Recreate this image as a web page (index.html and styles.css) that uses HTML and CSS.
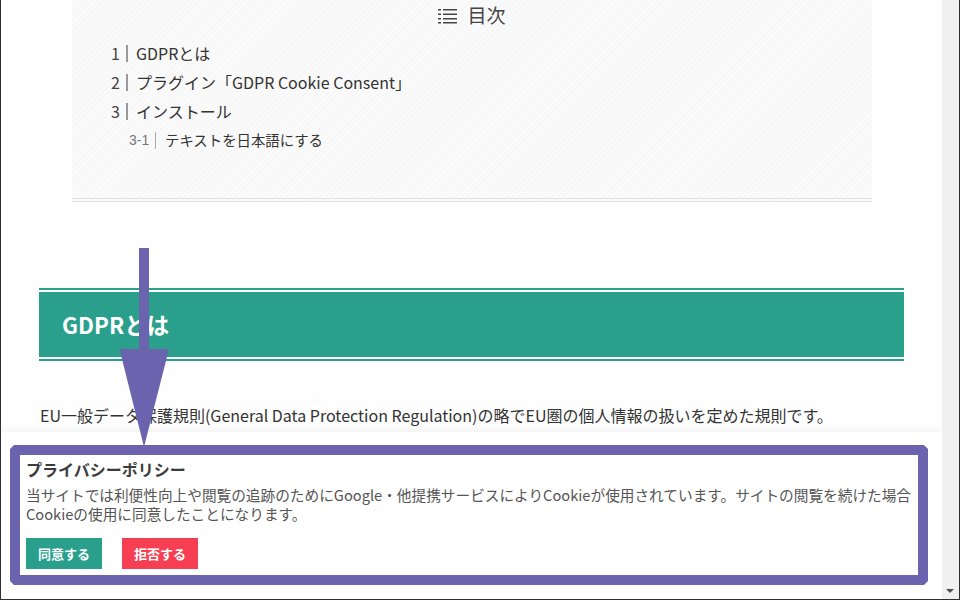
FILE: index.html
```html
<!DOCTYPE html>
<html lang="ja">
<head>
<meta charset="utf-8">
<title>GDPR Cookie Consent</title>
<link rel="stylesheet" href="styles.css">
</head>
<body>
<div class="window">
  <main class="page">
    <nav class="toc">
      <div class="toc-title">
        <svg class="toc-icon" width="19" height="16" viewBox="0 0 19 16" aria-hidden="true">
          <path d="M0 1h3v1.500H0zM0 5.500h3V7H0zM0 10h3v1.500H0zM0 14h3v1.500H0z" fill="#444"/>
          <path d="M5 1h14v1.500H5zM5 5.500h14V7H5zM5 10h14v1.500H5zM5 14h14v1.500H5z" fill="#444"/>
        </svg>
        <span>目次</span>
      </div>
      <ol class="toc-list">
        <li class="toc-item"><span class="toc-num">1</span><span class="toc-text">GDPRとは</span></li>
        <li class="toc-item"><span class="toc-num">2</span><span class="toc-text">プラグイン「GDPR Cookie Consent」</span></li>
        <li class="toc-item"><span class="toc-num">3</span><span class="toc-text">インストール</span></li>
        <li class="toc-item toc-sub"><span class="toc-num">3-1</span><span class="toc-text">テキストを日本語にする</span></li>
      </ol>
    </nav>
    <h2 class="section-heading">GDPRとは</h2>
    <p class="lead">EU一般データ保護規則(General Data Protection Regulation)の略でEU圏の個人情報の扱いを定めた規則です。</p>
    <aside class="cookie">
      <div class="cookie-frame">
        <div class="cookie-inner">
          <h3 class="cookie-title">プライバシーポリシー</h3>
          <p class="cookie-text">当サイトでは利便性向上や閲覧の追跡のためにGoogle・他提携サービスによりCookieが使用されています。サイトの閲覧を続けた場合Cookieの使用に同意したことになります。</p>
          <div class="cookie-actions">
            <button class="btn btn-accept">同意する</button>
            <button class="btn btn-reject">拒否する</button>
          </div>
        </div>
      </div>
    </aside>
  </main>
  <div class="scrollbar"><span class="scroll-down"></span></div>
  <svg class="callout" width="960" height="600" viewBox="0 0 960 600" aria-hidden="true">
    <path d="M139 248h10v101h20L144 447 119.500 349H139z" fill="#6b63ad"/>
  </svg>
</div>
</body>
</html>
```
FILE: styles.css
```css
* { box-sizing: border-box; }
html, body { margin: 0; padding: 0; }
body {
  width: 960px;
  height: 600px;
  overflow: hidden;
  background: #fff;
  color: #333;
  font-family: "Noto Sans CJK JP", "Noto Sans", sans-serif;
}
.window {
  position: relative;
  display: flex;
  width: 960px;
  height: 600px;
  border-left: 1px solid #2c3033;
  border-right: 1px solid #2c3033;
  border-bottom: 1px solid #2c3033;
}
.page {
  position: relative;
  flex: 1;
  min-width: 0;
  overflow: hidden;
  background: #fefefe;
}
.scrollbar {
  position: relative;
  width: 17px;
  background: #f0f0f0;
}
.scroll-down {
  position: absolute;
  left: 4px;
  bottom: 6px;
  border-left: 4px solid transparent;
  border-right: 4px solid transparent;
  border-top: 4px solid #505050;
}
.callout {
  position: absolute;
  left: -1px;
  top: 0;
  pointer-events: none;
}
.toc {
  width: 800px;
  height: 202px;
  margin-left: 71px;
  border-bottom: 4px double #e2e2e2;
  background: repeating-linear-gradient(-45deg, #fbfbfb 0 2px, #f7f7f7 2px 4px);
}
.toc-title {
  display: flex;
  justify-content: center;
  align-items: center;
  gap: 10px;
  height: 29px;
  font-size: 19px;
  line-height: 29px;
  color: #444;
}
.toc-icon { display: block; margin-top: 2px; }
.toc-list {
  margin: 10px 0 0;
  padding: 0 0 0 39px;
  list-style: none;
  font-size: 16px;
  line-height: 29px;
}
.toc-item {
  display: flex;
  align-items: center;
  height: 29px;
}
.toc-num {
  width: 17px;
  height: 17px;
  line-height: 17px;
  margin-right: 8px;
  border-right: 2px solid #999;
  color: #444;
}
.toc-sub {
  padding-left: 18px;
  font-size: 14.4px;
}
.toc-sub .toc-num {
  width: 27px;
  margin-right: 9px;
  font-family: "Liberation Sans", sans-serif;
  font-size: 14px;
  color: #777;
  border-right: 1px solid #aaa;
}
.toc-sub .toc-text { position: relative; top: -1px; }
.section-heading {
  width: 865px;
  height: 73px;
  margin: 86px 0 0 38px;
  padding-left: 23px;
  border-top: 6px double #2aa08c;
  border-bottom: 6px double #2aa08c;
  background: #2aa08c;
  background-clip: padding-box;
  color: #fff;
  font-size: 22.4px;
  font-weight: 700;
  line-height: 61px;
}
.lead {
  margin: 40px 0 0 39px;
  font-size: 16px;
  line-height: 28px;
  color: #333;
  white-space: nowrap;
}
.cookie {
  position: absolute;
  left: 0;
  right: 0;
  bottom: 0;
  height: 167px;
  padding: 13px 14px 14px 9px;
  background: #fff;
  box-shadow: 0 -4px 8px rgba(0, 0, 0, 0.04);
}
.cookie-frame {
  height: 140px;
  padding: 10px;
  background: #6b63ad;
  clip-path: polygon(4px 0, calc(100% - 4px) 0, 100% 4px, 100% calc(100% - 4px), calc(100% - 4px) 100%, 4px 100%, 0 calc(100% - 4px), 0 4px);
}
.cookie-inner {
  height: 120px;
  padding: 3px 6px 6px;
  background: #fff;
}
.cookie-title {
  margin: 0;
  font-size: 16px;
  font-weight: 700;
  line-height: 22px;
  color: #3c3c3c;
}
.cookie-text {
  margin: 5px 0 0;
  font-size: 14.67px;
  line-height: 19px;
  color: #555;
}
.cookie-actions {
  display: flex;
  gap: 20px;
  margin-top: 15px;
}
.btn {
  width: 76px;
  height: 31px;
  padding: 0;
  border: 0;
  color: #fff;
  font-family: inherit;
  font-size: 13px;
  font-weight: 700;
}
.btn-accept { background: #2aa08c; }
.btn-reject { background: #f63f53; }
```
